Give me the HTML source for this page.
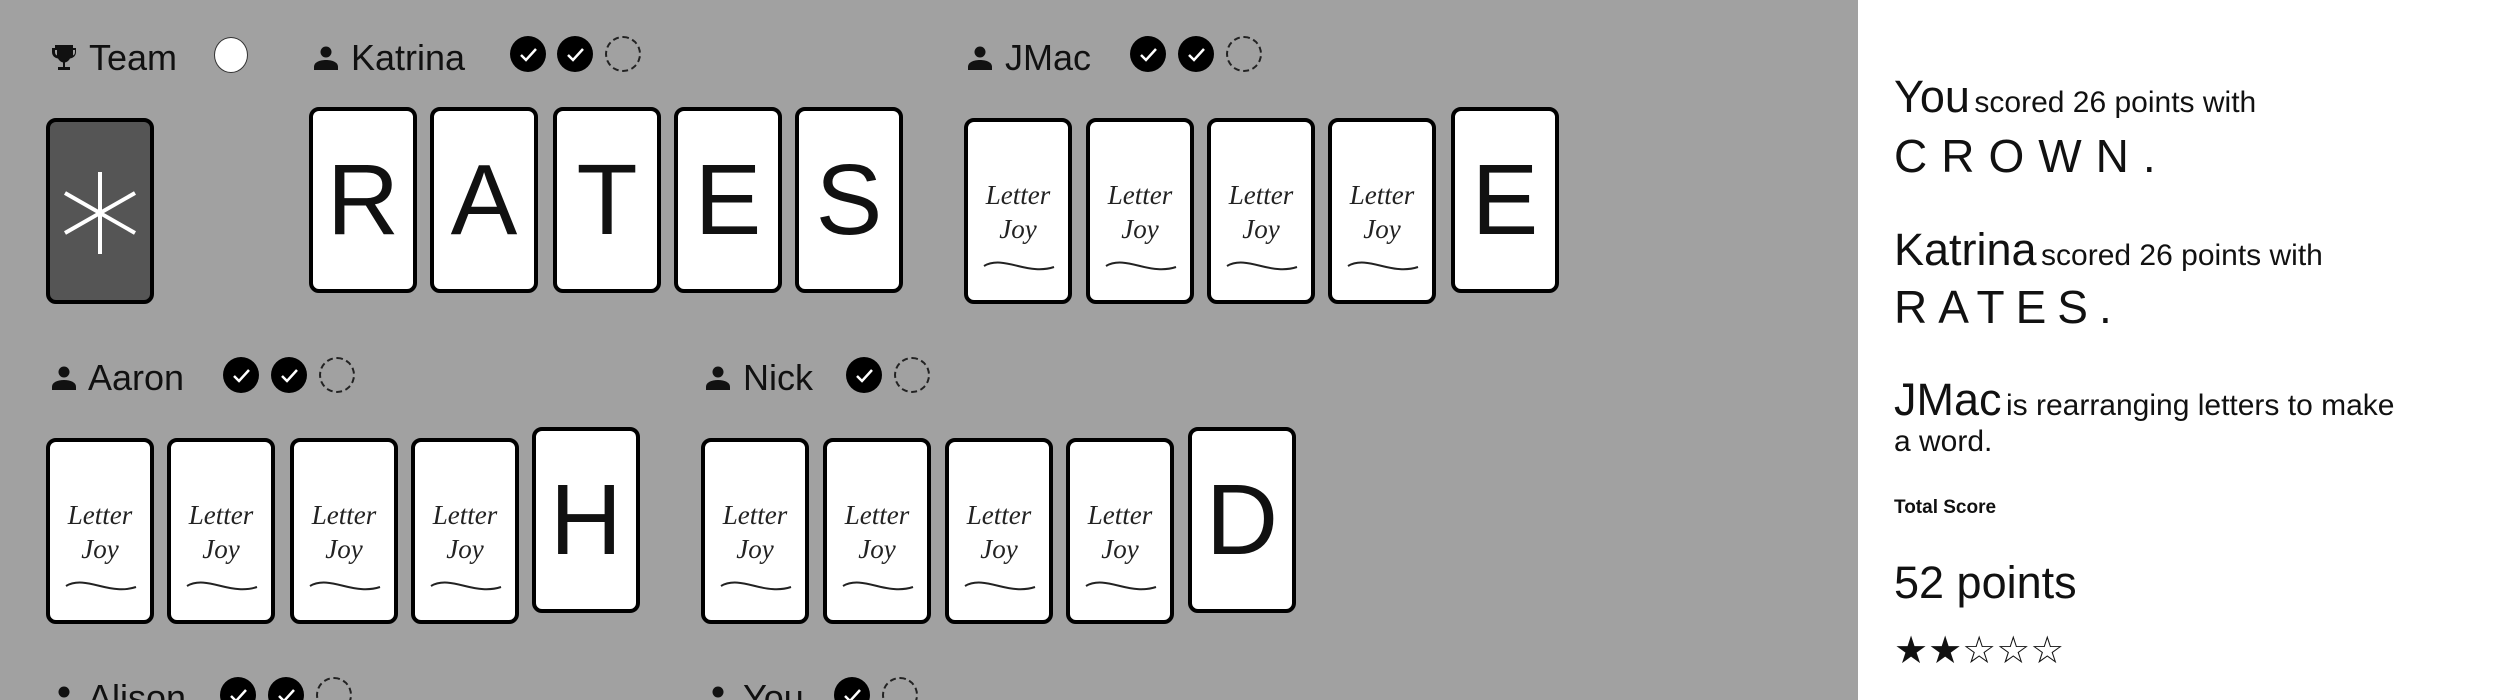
<!DOCTYPE html>
<html><head><meta charset="utf-8"><style>
*{margin:0;padding:0;box-sizing:border-box}
body{width:2500px;height:700px;overflow:hidden;background:#fff;font-family:"Liberation Sans",sans-serif;color:#111;position:relative}
#left{position:absolute;left:0;top:0;width:1858px;height:700px;background:#a1a1a1;overflow:hidden}
.a{position:absolute}
.name{position:absolute;font-size:36px;line-height:36px;color:#111;white-space:nowrap}
.chk{position:absolute;width:36px;height:36px;border-radius:50%;background:#000}
.chk svg{position:absolute;left:0;top:0}
.dash{position:absolute;width:36px;height:36px;border-radius:50%;border:2px dashed #222}
.card{position:absolute;width:108px;height:186px;background:#fff;border:4px solid #000;border-radius:10px;overflow:hidden}
.face{font-size:100px;line-height:178px;text-align:center;color:#111}
.back .l1,.back .l2{position:absolute;left:0;width:100%;text-align:center;font-family:"Liberation Serif",serif;font-style:italic;font-size:27px;color:#222}
.back .l1{top:58px}.back .l2{top:92px}
.back svg{position:absolute;left:15px;top:138px}
#right{position:absolute;left:1894px;top:0;width:600px}
.big{font-size:45px}
.sm{font-size:30px}
</style></head><body>
<div id="left">
<svg class="a" style="left:51px;top:43px" width="26" height="28" viewBox="0 0 26 28"><path d="M4 2h18v3h3v4c0 4-3 6-6 6.5-1 2-3 3.5-5 4V24h5v3H7v-3h5v-4.5c-2-.5-4-2-5-4C4 15 1 13 1 9V5h3zM4 7v2c0 2 1 3 2 3.5V7zm18 0v5.5c1-.5 2-1.5 2-3.5V7z" fill="#111"/></svg>
<div class="name" style="left:89px;top:40px">Team</div>
<div class="a" style="left:214px;top:37px;width:34px;height:36px;border-radius:50%;background:#fff;border:1.5px solid #333"></div>

<svg class="a" style="left:314px;top:46px" width="24" height="24" viewBox="0 0 24 24"><circle cx="12" cy="6" r="5.5" fill="#111"/><path d="M0 24v-3c0-5 6-7 12-7s12 2 12 7v3z" fill="#111"/></svg>
<div class="name" style="left:351px;top:40px">Katrina</div>
<div class="chk" style="left:510px;top:36px"><svg width="36" height="36"><path d="M11 19l5 5 10-11" stroke="#fff" stroke-width="2.5" fill="none"/></svg></div>
<div class="chk" style="left:557px;top:36px"><svg width="36" height="36"><path d="M11 19l5 5 10-11" stroke="#fff" stroke-width="2.5" fill="none"/></svg></div>
<div class="dash" style="left:605px;top:36px"></div>

<svg class="a" style="left:968px;top:46px" width="24" height="24" viewBox="0 0 24 24"><circle cx="12" cy="6" r="5.5" fill="#111"/><path d="M0 24v-3c0-5 6-7 12-7s12 2 12 7v3z" fill="#111"/></svg>
<div class="name" style="left:1005px;top:40px">JMac</div>
<div class="chk" style="left:1130px;top:36px"><svg width="36" height="36"><path d="M11 19l5 5 10-11" stroke="#fff" stroke-width="2.5" fill="none"/></svg></div>
<div class="chk" style="left:1178px;top:36px"><svg width="36" height="36"><path d="M11 19l5 5 10-11" stroke="#fff" stroke-width="2.5" fill="none"/></svg></div>
<div class="dash" style="left:1226px;top:36px"></div>

<div class="card" style="left:46px;top:118px;background:#555"><svg width="100" height="178" viewBox="0 0 100 178"><g stroke="#fff" stroke-width="4"><path d="M50 50v82M15 71l70 40M15 111l70-40"/></g></svg></div>
<div class="card face" style="left:309px;top:107px">R</div>
<div class="card face" style="left:430px;top:107px">A</div>
<div class="card face" style="left:553px;top:107px">T</div>
<div class="card face" style="left:674px;top:107px">E</div>
<div class="card face" style="left:795px;top:107px">S</div>

<div class="card back" style="left:964px;top:118px"><div class="l1">Letter</div><div class="l2">Joy</div><svg width="72" height="12"><path d="M1 6c10-6 22-3 34 0s24 5 36 1" stroke="#222" stroke-width="2" fill="none"/></svg></div>
<div class="card back" style="left:1086px;top:118px"><div class="l1">Letter</div><div class="l2">Joy</div><svg width="72" height="12"><path d="M1 6c10-6 22-3 34 0s24 5 36 1" stroke="#222" stroke-width="2" fill="none"/></svg></div>
<div class="card back" style="left:1207px;top:118px"><div class="l1">Letter</div><div class="l2">Joy</div><svg width="72" height="12"><path d="M1 6c10-6 22-3 34 0s24 5 36 1" stroke="#222" stroke-width="2" fill="none"/></svg></div>
<div class="card back" style="left:1328px;top:118px"><div class="l1">Letter</div><div class="l2">Joy</div><svg width="72" height="12"><path d="M1 6c10-6 22-3 34 0s24 5 36 1" stroke="#222" stroke-width="2" fill="none"/></svg></div>
<div class="card face" style="left:1451px;top:107px">E</div>

<svg class="a" style="left:52px;top:366px" width="24" height="24" viewBox="0 0 24 24"><circle cx="12" cy="6" r="5.5" fill="#111"/><path d="M0 24v-3c0-5 6-7 12-7s12 2 12 7v3z" fill="#111"/></svg>
<div class="name" style="left:88px;top:360px">Aaron</div>
<div class="chk" style="left:223px;top:357px"><svg width="36" height="36"><path d="M11 19l5 5 10-11" stroke="#fff" stroke-width="2.5" fill="none"/></svg></div>
<div class="chk" style="left:271px;top:357px"><svg width="36" height="36"><path d="M11 19l5 5 10-11" stroke="#fff" stroke-width="2.5" fill="none"/></svg></div>
<div class="dash" style="left:319px;top:357px"></div>

<svg class="a" style="left:706px;top:366px" width="24" height="24" viewBox="0 0 24 24"><circle cx="12" cy="6" r="5.5" fill="#111"/><path d="M0 24v-3c0-5 6-7 12-7s12 2 12 7v3z" fill="#111"/></svg>
<div class="name" style="left:743px;top:360px">Nick</div>
<div class="chk" style="left:846px;top:357px"><svg width="36" height="36"><path d="M11 19l5 5 10-11" stroke="#fff" stroke-width="2.5" fill="none"/></svg></div>
<div class="dash" style="left:894px;top:357px"></div>

<div class="card back" style="left:46px;top:438px"><div class="l1">Letter</div><div class="l2">Joy</div><svg width="72" height="12"><path d="M1 6c10-6 22-3 34 0s24 5 36 1" stroke="#222" stroke-width="2" fill="none"/></svg></div>
<div class="card back" style="left:167px;top:438px"><div class="l1">Letter</div><div class="l2">Joy</div><svg width="72" height="12"><path d="M1 6c10-6 22-3 34 0s24 5 36 1" stroke="#222" stroke-width="2" fill="none"/></svg></div>
<div class="card back" style="left:290px;top:438px"><div class="l1">Letter</div><div class="l2">Joy</div><svg width="72" height="12"><path d="M1 6c10-6 22-3 34 0s24 5 36 1" stroke="#222" stroke-width="2" fill="none"/></svg></div>
<div class="card back" style="left:411px;top:438px"><div class="l1">Letter</div><div class="l2">Joy</div><svg width="72" height="12"><path d="M1 6c10-6 22-3 34 0s24 5 36 1" stroke="#222" stroke-width="2" fill="none"/></svg></div>
<div class="card face" style="left:532px;top:427px">H</div>

<div class="card back" style="left:701px;top:438px"><div class="l1">Letter</div><div class="l2">Joy</div><svg width="72" height="12"><path d="M1 6c10-6 22-3 34 0s24 5 36 1" stroke="#222" stroke-width="2" fill="none"/></svg></div>
<div class="card back" style="left:823px;top:438px"><div class="l1">Letter</div><div class="l2">Joy</div><svg width="72" height="12"><path d="M1 6c10-6 22-3 34 0s24 5 36 1" stroke="#222" stroke-width="2" fill="none"/></svg></div>
<div class="card back" style="left:945px;top:438px"><div class="l1">Letter</div><div class="l2">Joy</div><svg width="72" height="12"><path d="M1 6c10-6 22-3 34 0s24 5 36 1" stroke="#222" stroke-width="2" fill="none"/></svg></div>
<div class="card back" style="left:1066px;top:438px"><div class="l1">Letter</div><div class="l2">Joy</div><svg width="72" height="12"><path d="M1 6c10-6 22-3 34 0s24 5 36 1" stroke="#222" stroke-width="2" fill="none"/></svg></div>
<div class="card face" style="left:1188px;top:427px">D</div>

<svg class="a" style="left:52px;top:686px" width="24" height="24" viewBox="0 0 24 24"><circle cx="12" cy="6" r="5.5" fill="#111"/><path d="M0 24v-3c0-5 6-7 12-7s12 2 12 7v3z" fill="#111"/></svg>
<div class="name" style="left:88px;top:680px">Alison</div>
<div class="chk" style="left:220px;top:677px"><svg width="36" height="36"><path d="M11 19l5 5 10-11" stroke="#fff" stroke-width="2.5" fill="none"/></svg></div>
<div class="chk" style="left:268px;top:677px"><svg width="36" height="36"><path d="M11 19l5 5 10-11" stroke="#fff" stroke-width="2.5" fill="none"/></svg></div>
<div class="dash" style="left:316px;top:677px"></div>
<svg class="a" style="left:706px;top:686px" width="24" height="24" viewBox="0 0 24 24"><circle cx="12" cy="6" r="5.5" fill="#111"/><path d="M0 24v-3c0-5 6-7 12-7s12 2 12 7v3z" fill="#111"/></svg>
<div class="name" style="left:743px;top:680px">You</div>
<div class="chk" style="left:834px;top:677px"><svg width="36" height="36"><path d="M11 19l5 5 10-11" stroke="#fff" stroke-width="2.5" fill="none"/></svg></div>
<div class="dash" style="left:882px;top:677px"></div>
</div>

<div id="right">
<div class="a" style="top:71px;left:0;white-space:nowrap"><span class="big">You</span> <span class="sm">scored 26 points with</span></div>
<div class="a" style="top:129px;left:0;font-size:46px;letter-spacing:14px;white-space:nowrap">CROWN<span style="letter-spacing:0">.</span></div>
<div class="a" style="top:224px;left:0;white-space:nowrap"><span class="big">Katrina</span> <span class="sm">scored 26 points with</span></div>
<div class="a" style="top:280px;left:0;font-size:46px;letter-spacing:11px;white-space:nowrap">RATES<span style="letter-spacing:0">.</span></div>
<div class="a" style="top:374px;left:0;white-space:nowrap"><span class="big">JMac</span> <span class="sm">is rearranging letters to make</span></div>
<div class="a sm" style="top:425px;left:0">a word.</div>
<div class="a" style="top:497px;left:0;font-size:19px;font-weight:bold">Total Score</div>
<div class="a" style="top:557px;left:0;font-size:45px">52 points</div>
<div class="a" style="top:628px;left:0;font-size:38px;letter-spacing:0px;font-family:'DejaVu Sans',sans-serif">★★☆☆☆</div>
</div>
</body></html>
